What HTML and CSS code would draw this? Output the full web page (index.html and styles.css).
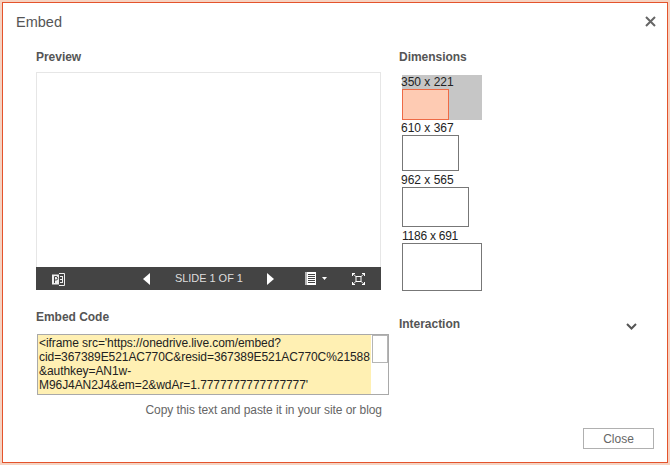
FILE: index.html
```html
<!DOCTYPE html>
<html lang="en">
<head>
<meta charset="utf-8">
<title>Embed</title>
<link rel="stylesheet" href="styles.css">
</head>
<body>
<div class="dialog">
  <header class="head">
    <h1 class="title">Embed</h1>
    <svg class="x" width="11" height="11" viewBox="0 0 11 11"><path d="M1 1l9 9M10 1l-9 9" stroke="#666" stroke-width="2" fill="none"/></svg>
  </header>
  <div class="body">
    <section class="left">
      <h2 class="label">Preview</h2>
      <div class="preview">
        <div class="stage"></div>
        <div class="bar">
          <svg class="ppt" width="13" height="13" viewBox="0 0 13 13"><path d="M7 .5h5.500v12H7" fill="none" stroke="#eee" stroke-width="1"/><path d="M8 3.500h3M8 6.500h3M8 9.500h3M10.500 3.500v6" fill="none" stroke="#eee" stroke-width="1"/><rect x="0" y="1.500" width="7" height="10" fill="#eee"/><path d="M2.500 10V3.500h1.500a1.600 1.600 0 010 3.500H2.500" fill="none" stroke="#444" stroke-width="1"/></svg>
          <svg class="prev" width="7" height="12" viewBox="0 0 7 12"><path d="M7 0v12L0 6z" fill="#fff"/></svg>
          <span class="count">SLIDE 1 OF 1</span>
          <svg class="next" width="7" height="12" viewBox="0 0 7 12"><path d="M0 0v12l7-6z" fill="#fff"/></svg>
          <svg class="notes" width="12" height="13" viewBox="0 0 12 13"><rect width="11" height="13" fill="#fff"/><rect x="0" width="2" height="13" fill="#bbb"/><path d="M3 2.500h7M3 4.500h7M3 6.500h7M3 8.500h7M3 10.500h7" stroke="#444" stroke-width="1"/></svg>
          <svg class="caret" width="5" height="3" viewBox="0 0 5 3"><path d="M0 0h5L2.500 3z" fill="#fff"/></svg>
          <svg class="full" width="13" height="12" viewBox="0 0 13 12"><rect x="4" y="3.500" width="5" height="5" fill="none" stroke="#fff" stroke-width="1"/><path d="M1 1l3 2.500M12 1L9 3.500M1 11l3-2.500M12 11L9 8.500" stroke="#ddd" stroke-width="1"/><path d="M0 3V0h3v1H1v2zM10 0h3v3h-1V1h-2zM0 9h1v2h2v1H0zM12 9h1v3h-3v-1h2z" fill="#fff"/></svg>
        </div>
      </div>
      <h2 class="label code-label">Embed Code</h2>
      <div class="code">
        <div class="code-text"><span class="hl">&lt;iframe src='https://onedrive.live.com/embed?<br>cid=367389E521AC770C&amp;resid=367389E521AC770C%21588<br>&amp;authkey=AN1w-<br>M96J4AN2J4&amp;em=2&amp;wdAr=1.7777777777777777'</span></div>
        <div class="track"><div class="thumb"></div></div>
      </div>
      <p class="hint">Copy this text and paste it in your site or blog</p>
    </section>
    <section class="right">
      <h2 class="label">Dimensions</h2>
      <ul class="sizes">
        <li class="size selected"><span class="size-name">350 x 221</span><div class="box b1"></div></li>
        <li class="size"><span class="size-name">610 x 367</span><div class="box b2"></div></li>
        <li class="size"><span class="size-name">962 x 565</span><div class="box b3"></div></li>
        <li class="size"><span class="size-name tight">1186 x 691</span><div class="box b4"></div></li>
      </ul>
      <div class="interaction">
        <h2 class="label">Interaction</h2>
        <svg class="chev" width="11" height="7" viewBox="0 0 11 7"><path d="M1 1l4.500 4.500L10 1" fill="none" stroke="#555" stroke-width="2"/></svg>
      </div>
    </section>
  </div>
  <footer class="foot"><button class="close" type="button">Close</button></footer>
</div>
</body>
</html>
```
FILE: styles.css
```css
* { box-sizing: border-box; }
html, body { margin: 0; padding: 0; }
body {
  width: 670px;
  height: 465px;
  padding: 2px;
  background: #f6d3c2;
  font-family: "Liberation Sans", Arial, sans-serif;
  overflow: hidden;
}
.dialog {
  width: 666px;
  height: 461px;
  border: 1px solid #e4532c;
  background: #fff;
  display: flex;
  flex-direction: column;
  position: relative;
}
.head {
  height: 38px;
  padding: 0 11px 0 13px;
  display: flex;
  align-items: center;
  justify-content: space-between;
}
.title {
  margin: 0;
  font-size: 14.500px;
  font-weight: 400;
  color: #555;
}
.x { margin-top: -2px; }
.body {
  display: flex;
  padding-left: 33px;
}
.left { width: 363px; }
.label {
  margin: 0;
  font-size: 12px;
  line-height: 14px;
  font-weight: 700;
  color: #555;
  letter-spacing: -0.03px;
}
.left > .label:first-child { margin-top: 9px; }
.preview {
  width: 345px;
  height: 218px;
  margin-top: 8px;
  display: flex;
  flex-direction: column;
  border: 1px solid #e6e6e6;
  border-bottom: 0;
}
.stage { flex: 1; background: #fff; }
.bar {
  height: 23px;
  margin: 0 -1px;
  background: #444;
  position: relative;
  color: #ddd;
  font-size: 11px;
}
.bar svg, .count { position: absolute; }
.ppt { left: 16px; top: 6px; }
.prev { left: 107px; top: 6px; }
.count { left: 139px; top: 5px; line-height: 13px; letter-spacing: -0.05px; }
.next { left: 231px; top: 6px; }
.notes { left: 269px; top: 5px; }
.caret { left: 286px; top: 10px; }
.full { left: 316px; top: 6px; }
.code-label { margin-top: 20px; }
.code {
  width: 352px;
  height: 61px;
  margin-top: 10px;
  margin-left: 1px;
  border: 1px solid #a9a9a9;
  display: flex;
  justify-content: space-between;
  overflow: hidden;
}
.code-text {
  width: 333px;
  padding: 1px 0 0 1px;
  background: #fff0b3;
  font-size: 12px;
  line-height: 14px;
  letter-spacing: -0.07px;
  color: #222;
  white-space: nowrap;
}
.track { width: 16px; }
.thumb {
  width: 16px;
  height: 28px;
  border: 1px solid #b5b5b5;
  background: #fff;
}
.hint {
  width: 346px;
  margin: 8px 0 0;
  text-align: right;
  font-size: 12px;
  line-height: 14px;
  letter-spacing: -0.06px;
  color: #666;
}
.right { width: 240px; }
.right > .label:first-child { margin-top: 9px; }
.sizes {
  list-style: none;
  margin: 11px 0 0 3px;
  padding: 0;
  font-size: 12px;
  line-height: 14px;
  color: #222;
}
.size { width: 80px; }
.size-name { display: block; margin-left: -1px; }
.size-name.tight { margin-left: 0; letter-spacing: -0.25px; }
.size.selected { background: #c6c6c6; height: 45px; margin-bottom: 1px; }
.box { border: 1px solid #777; background: #fff; }
.selected .box { border-color: #ee6a45; background: #fecbb3; }
.b1 { width: 47px; height: 31px; }
.b2 { width: 57px; height: 36px; margin-bottom: 2px; }
.b3 { width: 67px; height: 40px; margin-bottom: 2px; }
.b4 { width: 80px; height: 48px; }
.interaction {
  display: flex;
  justify-content: space-between;
  align-items: center;
  width: 238px;
  margin-top: 26px;
}
.chev { margin-top: 4px; }
.foot {
  position: absolute;
  right: 13px;
  bottom: 13px;
}
.close {
  display: block;
  width: 71px;
  height: 21px;
  border: 1px solid #b0b0b0;
  background: #fff;
  color: #666;
  font: 12px "Liberation Sans", Arial, sans-serif;
  padding: 0;
}
```
